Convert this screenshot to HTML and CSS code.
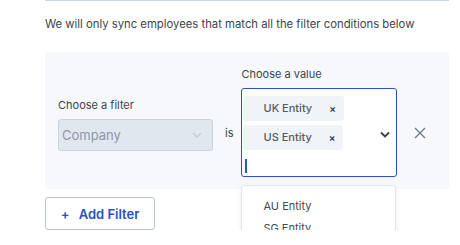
FILE: index.html
```html
<!DOCTYPE html>
<html lang="en">
<head>
    <meta charset="UTF-8">
    <meta name="viewport" content="width=device-width, initial-scale=1.0">
    <title>Sync Filters</title>
    <link rel="stylesheet" href="styles.css">
</head>
<body>
<div class="section">
    <p class="intro">We will only sync employees that match all the filter conditions below</p>

    <div class="filter-panel">
        <div class="filter-row">
            <div class="field field-filter">
                <label>Choose a filter</label>
                <div class="select disabled">
                    <span>Company</span>
                    <svg class="chevron" width="10" height="6" viewBox="0 0 10 6"><path d="M1 1l4 4 4-4" fill="none" stroke="currentColor" stroke-width="1.2"/></svg>
                </div>
            </div>
            <span class="is">is</span>
            <div class="field field-value">
                <label>Choose a value</label>
                <div class="multi">
                    <div class="chips">
                        <span class="chip">UK Entity <b>&times;</b></span>
                        <span class="chip">US Entity <b>&times;</b></span>
                        <span class="caret"></span>
                    </div>
                    <svg class="chevron dark" width="10" height="7" viewBox="0 0 10 7"><path d="M1 1.5l4 4 4-4" fill="none" stroke="currentColor" stroke-width="1.8"/></svg>
                </div>
                <ul class="menu">
                    <li>AU Entity</li>
                    <li>SG Entity</li>
                </ul>
            </div>
            <svg class="remove" width="12" height="12" viewBox="0 0 12 12"><path d="M1 1l10 10M11 1L1 11" stroke="currentColor" stroke-width="1.4"/></svg>
        </div>
    </div>

    <button class="add-btn"><span class="plus">+</span> Add Filter</button>
</div>
</body>
</html>
```

FILE: styles.css
```css
body {
    margin: 0;
    font-family: Inter, "Open Sans", sans-serif;
    background-color: white;
    color: #3a3f47;
}

.section {
    margin-left: 45px;
    width: 404px;
    border-top: 1px solid #c9d5e1;
}

.intro {
    margin: 16px 0 0;
    font-size: 11.3px;
    line-height: 14px;
    color: #3d434b;
}

.filter-panel {
    margin-top: 21px;
    background-color: #f6f8fc;
    border-radius: 3px;
    padding: 15px 0 12px 13px;
}

.filter-row {
    display: flex;
    align-items: center;
}

.field label {
    display: block;
    font-size: 11px;
    line-height: 14px;
    color: #3d434b;
    margin-bottom: 7px;
}

.field-filter {
    padding-top: 4px;
}

.select {
    width: 155px;
    height: 32px;
    box-sizing: border-box;
    display: flex;
    align-items: center;
    justify-content: space-between;
    padding: 0 10px 0 3px;
    border: 1px solid #c9d3df;
    border-radius: 3px;
}

.select.disabled {
    background-color: #e1e7ef;
    color: #8d98a8;
    font-size: 13px;
}

.chevron {
    color: #c2cad6;
}

.chevron.dark {
    color: #3a3f47;
}

/* sit level with the inputs, below the labels */
.is,
.remove {
    margin-top: 21px;
}

.is {
    font-size: 11px;
    margin-left: 12px;
    margin-right: 8px;
    color: #3d434b;
}

.field-value {
    position: relative;
}

.multi {
    width: 156px;
    height: 89px;
    box-sizing: border-box;
    border: 1px solid #2a52c4;
    border-radius: 3px;
    background-color: white;
    display: flex;
    align-items: center;
    padding: 4px 6px 0 1px;
}

.chips {
    flex: 1;
    display: flex;
    flex-direction: column;
    align-items: flex-start;
    gap: 4px;
}

.chip {
    background-color: #f0f3f7;
    font-size: 11px;
    font-weight: 500;
    color: #555b64;
    height: 25px;
    line-height: 25px;
    padding: 0 8px 0 20px;
    border-radius: 3px;
}

.chip b {
    font-size: 10px;
    font-weight: 600;
    margin-left: 14px;
    color: #333;
}

.caret {
    width: 2px;
    height: 14px;
    background-color: #2a52c4;
    margin: 5px 0 0 2px;
}

.menu {
    position: absolute;
    top: 118px;
    left: 0;
    width: 155px;
    height: 70px;
    box-sizing: border-box;
    margin: 0;
    padding: 9px 0 0 21px;
    list-style: none;
    background-color: white;
    border: 1px solid #e2e6ec;
    border-radius: 4px;
    box-shadow: 0 2px 6px rgba(0,0,0,0.06);
}

.menu li {
    font-size: 11px;
    line-height: 22px;
    color: #444a52;
}

.remove {
    margin-left: 17px;
    color: #6e7b8d;
}

.add-btn {
    margin-top: 8px;
    width: 110px;
    height: 33px;
    background-color: white;
    border: 1px solid #b9c5d4;
    border-radius: 3px;
    font-family: inherit;
    font-size: 13px;
    font-weight: 600;
    color: #2a4fc2;
}

.plus {
    margin-right: 6px;
}
```
